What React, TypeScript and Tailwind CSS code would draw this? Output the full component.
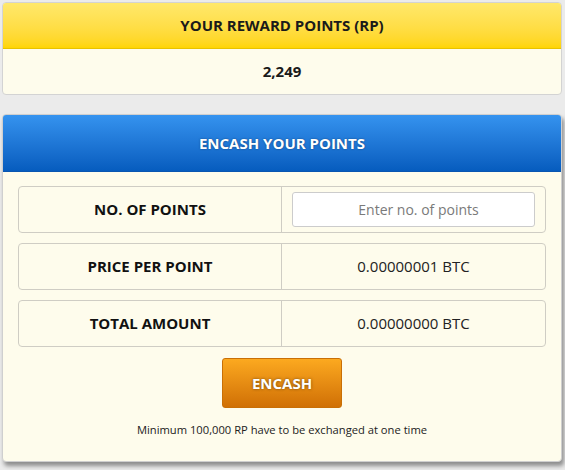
import React, { useState } from 'react';

const rows = [
  { label: 'PRICE PER POINT', value: '0.00000001 BTC' },
  { label: 'TOTAL AMOUNT', value: '0.00000000 BTC' },
];

export default function App() {
  const [points, setPoints] = useState('');

  return (
    <div
      className="w-[565px] h-[470px] bg-[#ebebeb] p-[2px] pr-[3px] overflow-hidden"
      style={{ fontFamily: '"Open Sans", "Liberation Sans", sans-serif' }}
    >
      {/* Reward points */}
      <div className="border border-[#d3d3d3] rounded-[4px] overflow-hidden bg-[#fefcec]">
        <div className="h-[46px] flex items-center justify-center bg-gradient-to-b from-[#ffe86a] to-[#ffd500] border-b border-[#e8c200]">
          <span className="text-[15px] font-bold text-[#1a1a1a]">YOUR REWARD POINTS (RP)</span>
        </div>
        <div className="h-[45px] flex items-center justify-center">
          <span className="text-[15px] font-bold text-[#1a1a1a]">2,249</span>
        </div>
      </div>

      {/* Encash */}
      <div className="mt-[19px] border border-[#cfcfcf] rounded-[4px] overflow-hidden bg-[#fefcec] shadow-[2px_4px_4px_rgba(0,0,0,0.4)]">
        <div className="h-[57px] flex items-center justify-center bg-gradient-to-b from-[#3593ef] to-[#065cbe] border-b border-[#0a56b0]">
          <span className="text-[15px] font-bold text-white [text-shadow:0_0_2px_rgba(0,0,0,0.45)]">
            ENCASH YOUR POINTS
          </span>
        </div>

        <div className="px-[15px] pt-[14px] pb-[22px] flex flex-col items-center">
          <div className="w-full flex flex-col gap-[10px]">
            <div className="h-[47px] flex border border-[#cfcdc4] rounded-[4px]">
              <div className="w-[263px] flex items-center justify-center border-r border-[#cfcdc4]">
                <span className="text-[15px] font-bold text-[#111]">NO. OF POINTS</span>
              </div>
              <div className="flex-1 flex items-center px-[10px]">
                <input
                  value={points}
                  onChange={(e) => setPoints(e.target.value)}
                  placeholder="Enter no. of points"
                  className="w-full h-[35px] bg-white border border-[#cccccc] rounded-[3px] text-center pl-[10px] text-[14px] text-[#333] placeholder:text-[#7a7a7a] outline-none"
                />
              </div>
            </div>

            {rows.map((r) => (
              <div key={r.label} className="h-[47px] flex border border-[#cfcdc4] rounded-[4px]">
                <div className="w-[263px] flex items-center justify-center border-r border-[#cfcdc4]">
                  <span className="text-[15px] font-bold text-[#111]">{r.label}</span>
                </div>
                <div className="flex-1 flex items-center justify-center">
                  <span className="text-[15px] text-[#222]">{r.value}</span>
                </div>
              </div>
            ))}
          </div>

          <button className="mt-[11px] w-[120px] h-[50px] rounded-[3px] border border-[#c96f05] bg-gradient-to-b from-[#fca91f] to-[#d07005] text-white text-[15px] font-bold [text-shadow:0_0_3px_rgba(0,0,0,0.5)]">
            ENCASH
          </button>

          <p className="mt-[14px] text-[11.2px] text-[#222]">
            Minimum 100,000 RP have to be exchanged at one time
          </p>
        </div>
      </div>
    </div>
  );
}
